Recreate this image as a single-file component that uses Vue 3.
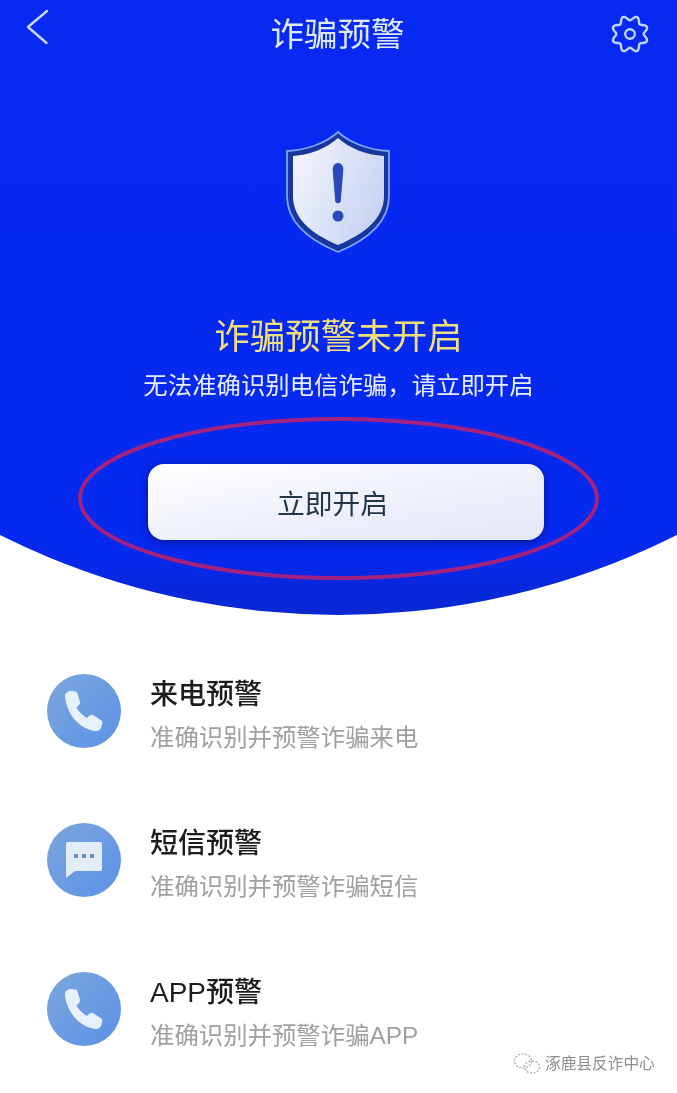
<script setup>
const rows = [
  { id: 1, title: '来电预警', desc: '准确识别并预警诈骗来电', icon: 'phone' },
  { id: 2, title: '短信预警', desc: '准确识别并预警诈骗短信', icon: 'msg' },
  { id: 3, title: 'APP预警', desc: '准确识别并预警诈骗APP', icon: 'phone' }
]

// Eight rounded gear teeth, with a valley at the top.
const gearPath = Array.from({ length: 145 }, (_, i) => {
  const a = (i / 144) * Math.PI * 2
  const r = 16 + 2.3 * Math.cos(8 * a + Math.PI)
  const x = 20 + r * Math.cos(a - Math.PI / 2)
  const y = 20 + r * Math.sin(a - Math.PI / 2)
  return `${i ? 'L' : 'M'}${x.toFixed(2)} ${y.toFixed(2)}`
}).join(' ') + ' Z'
</script>

<template>
  <div class="page">
    <section class="hero">
      <header class="nav">
        <svg class="back" width="24" height="36" viewBox="0 0 24 36" fill="none">
          <path d="M22 2 L3 18 L21.500 34" stroke="#c9d8ff" stroke-width="2.400" stroke-linecap="round" stroke-linejoin="round"/>
        </svg>
        <h1 class="title">诈骗预警</h1>
        <svg class="gear" width="40" height="40" viewBox="0 0 40 40" fill="none" stroke="#bcd6fa" stroke-width="2.400" stroke-linejoin="round">
          <path :d="gearPath"/>
          <circle cx="20" cy="20" r="4.800"/>
        </svg>
      </header>

      <svg class="shield" width="106" height="124" viewBox="0 0 106 124">
        <defs>
          <linearGradient id="sl" x1="0" y1="0" x2="1" y2="1">
            <stop offset="0" stop-color="#f6f7fc"/>
            <stop offset="1" stop-color="#d3dcf5"/>
          </linearGradient>
          <linearGradient id="sr" x1="0" y1="0" x2="1" y2="1">
            <stop offset="0" stop-color="#e3e8f9"/>
            <stop offset="1" stop-color="#c2cef1"/>
          </linearGradient>
        </defs>
        <path d="M53 2 C65 13 84 20 104 21 V66 C104 92 82 110 53 122 C24 110 2 92 2 66 V21 C22 20 41 13 53 2 Z" fill="#17379f" stroke="#7fa3ff" stroke-width="1.800"/>
        <path d="M53 8 C64 18 81 25 99 26 V66 C99 89 79 104 53 115 Z" fill="url(#sr)"/>
        <path d="M53 8 C42 18 25 25 8 26 V66 C8 89 27 104 53 115 Z" fill="url(#sl)"/>
        <path d="M53 33 C56.500 33 58.500 36 58.300 40 L55.800 71 C55.500 74 50.500 74 50.200 71 L47.700 40 C47.500 36 49.500 33 53 33 Z" fill="#2748b8"/>
        <circle cx="53" cy="86" r="5.500" fill="#2748b8"/>
      </svg>

      <h2 class="status">诈骗预警未开启</h2>
      <p class="hint">无法准确识别电信诈骗，请立即开启</p>
      <button class="open">立即开启</button>
      <svg class="ring" width="523" height="165" viewBox="0 0 523 165" fill="none">
        <ellipse cx="261.500" cy="82.500" rx="258.500" ry="79.500" stroke="#a4227f" stroke-width="4"/>
      </svg>
    </section>

    <ul class="list">
      <li v-for="r in rows" :key="r.id" class="row">
        <span class="badge">
          <svg v-if="r.icon === 'phone'" width="40" height="42" viewBox="0 0 40 42">
            <path d="M1 6 C1 3 4 1 7 1 L11 1.500 C12 1.500 13 2 13.500 3.500 L16 12 C16.300 13.500 15.500 14.500 14.500 15.500 L12.500 17.500 C14.500 21.500 18.500 25.500 23 28 L25.500 25.500 C26.500 24.500 28 24.500 29 25 L37.500 30.500 C38.500 31.500 38.500 32.500 38.300 33.500 L37 38 C36 40.500 33.500 41 31 41 C15 39 2 23 1 6 Z" fill="#e6f1fc"/>
          </svg>
          <svg v-else width="38" height="38" viewBox="0 0 38 38">
            <path d="M3 1 H35 C36.500 1 37 2 37 3 V28 C37 29.500 36.500 30 35 30 H10 L1 37 V3 C1 2 1.500 1 3 1 Z" fill="#e3edf9"/>
            <rect x="9" y="13" width="4" height="4" fill="#6b8fc4"/>
            <rect x="17" y="13" width="4" height="4" fill="#6b8fc4"/>
            <rect x="25" y="13" width="4" height="4" fill="#6b8fc4"/>
          </svg>
        </span>
        <div class="text">
          <div class="row-title">{{ r.title }}</div>
          <div class="row-desc">{{ r.desc }}</div>
        </div>
      </li>
    </ul>

    <div class="mark">
      <svg width="28" height="24" viewBox="0 0 28 24" fill="none" stroke="#b5b5b5" stroke-width="1.500" stroke-dasharray="2 1.500">
        <ellipse cx="10" cy="9" rx="8.500" ry="7"/>
        <ellipse cx="19" cy="15" rx="7.500" ry="6"/>
      </svg>
      <span>涿鹿县反诈中心</span>
    </div>
  </div>
</template>

<style>
html, body { margin: 0; background: #fff; }
</style>

<style scoped>
.page {
  position: relative;
  width: 677px;
  height: 1093px;
  overflow: hidden;
  background: #fff;
  font-family: "Liberation Sans", "Noto Sans CJK SC", sans-serif;
  filter: blur(0.5px);
}
.hero {
  position: relative;
  height: 615px;
  background: linear-gradient(#0729f2, #0529ef 90%, #0a27d0);
  clip-path: circle(756px at 338.5px -141px);
  display: flex;
  flex-direction: column;
  align-items: center;
}
.nav {
  align-self: stretch;
  height: 51px;
  padding: 9px 27px 0 25px;
  display: grid;
  grid-template-columns: 1fr auto 1fr;
  align-items: start;
  margin-bottom: 70px;
}
.gear { margin-top: 5px; justify-self: end; }
.title {
  margin: 8px 0 0;
  font-size: 33.5px;
  line-height: 36px;
  font-weight: 400;
  color: #dfe9f6;
}
.shield { display: block; margin-right: 1px; }
.status {
  margin: 63px 0 0;
  font-size: 35.5px;
  line-height: 40px;
  font-weight: 400;
  color: #efdf7e;
}
.hint {
  margin: 13px 0 0;
  font-size: 24.4px;
  line-height: 32px;
  color: #e8eeff;
}
.open {
  margin: 62px 0 0 14px;
  padding: 0 26px 0 0;
  width: 396px;
  height: 76px;
  border: 0;
  border-radius: 16px;
  background: linear-gradient(170deg, #ffffff, #eef1fb 55%, #e4e7f6);
  box-shadow: 0 2px 9px rgba(8, 20, 110, .75);
  font: inherit;
  font-size: 27.8px;
  color: #22384a;
}
.ring {
  position: absolute;
  left: 77px;
  top: 416px;
}
.list {
  list-style: none;
  margin: 0;
  padding: 46px 0 0 47px;
  display: flex;
  flex-direction: column;
  gap: 49px;
}
.row {
  display: flex;
  align-items: center;
  gap: 29px;
  height: 100px;
}
.badge {
  width: 74px;
  height: 74px;
  border-radius: 50%;
  background: linear-gradient(135deg, #7ca6de, #5b92e6);
  display: flex;
  align-items: center;
  justify-content: center;
  flex: none;
}
.text {
  display: flex;
  flex-direction: column;
  gap: 10px;
  padding-top: 8px;
}
.row-title {
  font-size: 28px;
  line-height: 35px;
  font-weight: 500;
  color: #1c1c1c;
}
.row-desc {
  font-size: 24.4px;
  line-height: 32px;
  color: #a0a0a0;
}
.mark {
  position: absolute;
  left: 513px;
  top: 1052px;
  display: flex;
  align-items: center;
  gap: 4px;
  font-size: 15.7px;
  line-height: 24px;
  color: #8f8f8f;
  white-space: nowrap;
}
</style>
